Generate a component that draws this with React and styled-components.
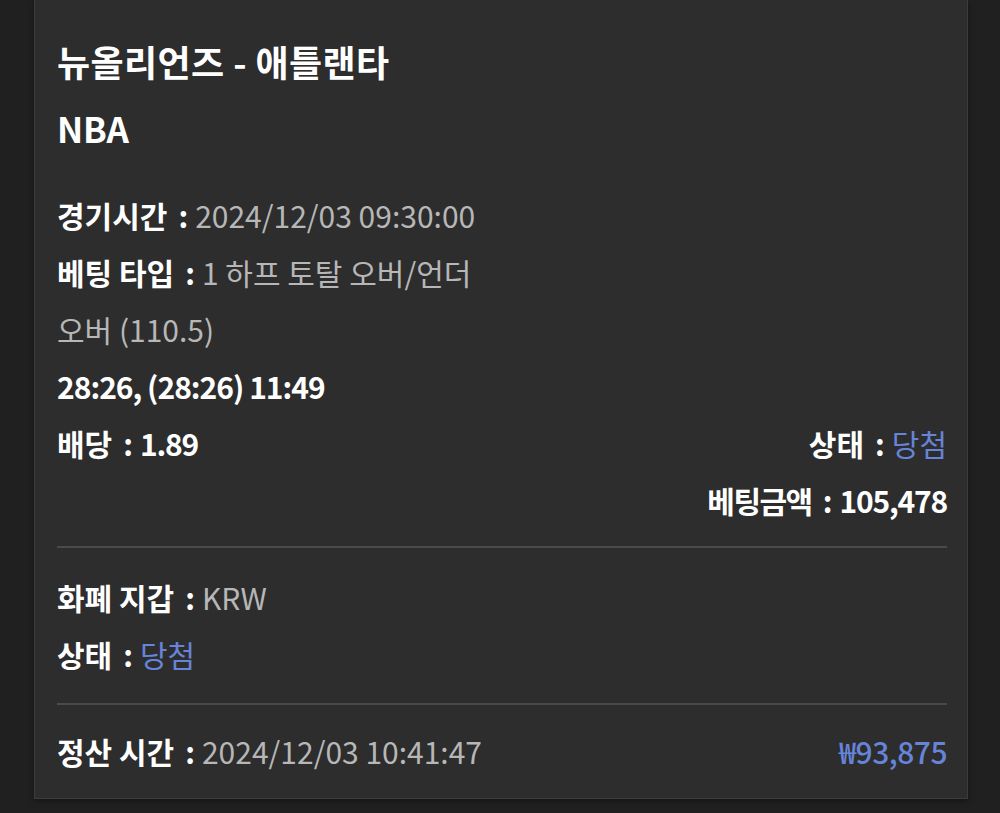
import React from 'react'
import styled, { createGlobalStyle } from 'styled-components'

const GlobalStyle = createGlobalStyle`
  html, body {
    margin: 0;
    padding: 0;
    background: #202020;
  }
  body {
    font-family: "Noto Sans CJK KR", "Noto Sans", sans-serif;
    color: #fff;
  }
  * { box-sizing: border-box; }
`

const Page = styled.div`
  width: 1000px;
  height: 813px;
  overflow: hidden;
  background: #202020;
`

const Card = styled.div`
  margin-left: 34px;
  width: 934px;
  background: #2d2d2d;
  border: 1px solid #3c3c3c;
  border-top: none;
  box-shadow: 0 2px 6px rgba(0, 0, 0, 0.35);
  padding: 39px 20px 19px 22px;
`

const Title = styled.div`
  font-size: 36px;
  font-weight: 700;
  line-height: 44px;
  color: #fff;
  letter-spacing: 0.4px;
`

const League = styled(Title)`
  font-size: 35px;
  letter-spacing: -0.3px;
  margin-top: 23px;
  margin-bottom: 36px;
`

const Row = styled.div`
  display: flex;
  align-items: center;
  justify-content: ${p => (p.$split ? 'space-between' : p.$right ? 'flex-end' : 'flex-start')};
  height: 57px;
  font-size: 30px;
`

const Field = styled.div`
  display: flex;
  align-items: center;
  white-space: nowrap;
`

const Label = styled.span`
  font-weight: 700;
  color: #fff;
  letter-spacing: ${p => (p.$tight ? '-1.5px' : '0')};
`

const Colon = styled.span`
  font-weight: 700;
  color: #fff;
  margin: 0 7px 0 11px;
`

const Value = styled.span`
  color: ${p => (p.$blue ? '#6684d8' : p.$strong ? '#fff' : '#b7b7b7')};
  font-weight: ${p => (p.$strong ? 700 : 400)};
  letter-spacing: ${p => (p.$strong ? '-1.2px' : '0')};
`

const Plain = styled.span`
  color: ${p => (p.$strong ? '#fff' : '#b7b7b7')};
  font-weight: ${p => (p.$strong ? 700 : 400)};
  letter-spacing: ${p => (p.$strong ? '-1px' : '0')};
`

const Divider = styled.div`
  height: 2px;
  background: #4a4a4a;
  margin: ${p => p.$m};
`

const Amount = styled.span`
  color: #6684d8;
  font-size: 30px;
  font-weight: 500;
  letter-spacing: -0.5px;
`

const Item = ({ label, value, blue, strong, tight }) => (
  <Field>
    <Label $tight={tight}>{label}</Label>
    <Colon>:</Colon>
    <Value $blue={blue} $strong={strong}>{value}</Value>
  </Field>
)

export default function App() {
  return (
    <Page>
      <GlobalStyle />
      <Card>
        <Title>뉴올리언즈 - 애틀랜타</Title>
        <League>NBA</League>

        <Row>
          <Item label="경기시간" value="2024/12/03 09:30:00" />
        </Row>
        <Row>
          <Item label="베팅 타입" value="1 하프 토탈 오버/언더" />
        </Row>
        <Row>
          <Plain>오버 (110.5)</Plain>
        </Row>
        <Row>
          <Plain $strong>28:26, (28:26) 11:49</Plain>
        </Row>
        <Row $split>
          <Item label="배당" value="1.89" strong />
          <Item label="상태" value="당첨" blue />
        </Row>
        <Row $right>
          <Item label="베팅금액" value="105,478" strong tight />
        </Row>

        <Divider $m="18px 0 20px" />

        <Row>
          <Item label="화폐 지갑" value="KRW" />
        </Row>
        <Row>
          <Item label="상태" value="당첨" blue />
        </Row>

        <Divider $m="21px 0 17px" />

        <Row $split>
          <Item label="정산 시간" value="2024/12/03 10:41:47" />
          <Amount>₩93,875</Amount>
        </Row>
      </Card>
    </Page>
  )
}
